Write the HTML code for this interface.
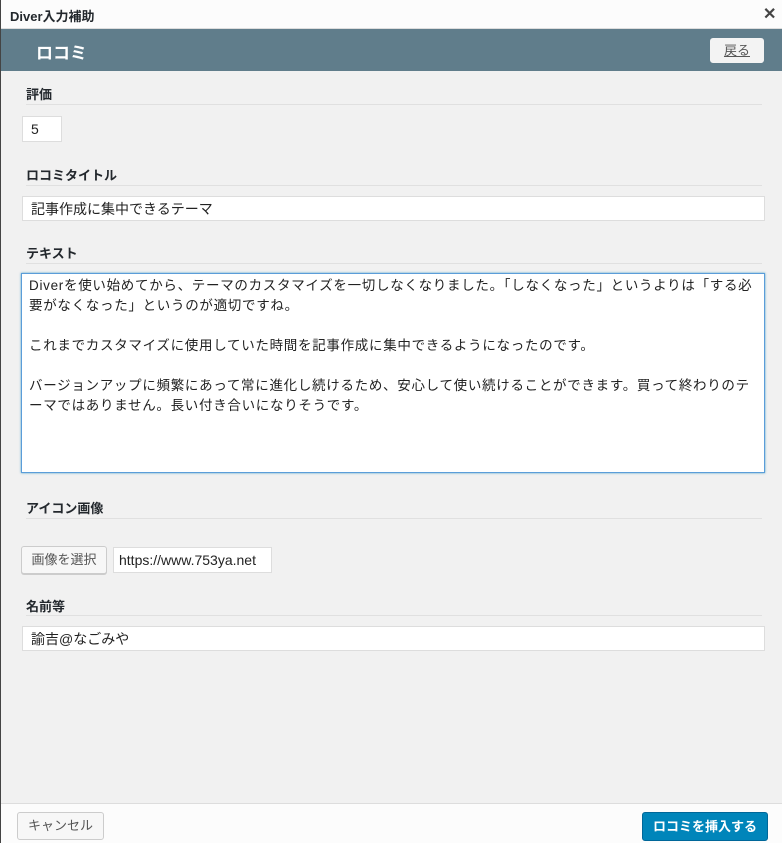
<!DOCTYPE html>
<html><head><meta charset="utf-8"><style>
*{box-sizing:border-box;margin:0;padding:0}
body{width:782px;height:843px;position:relative;overflow:hidden;background:#f1f1f1;font-family:"Liberation Sans","Noto Sans CJK JP",sans-serif;color:#23282d}
.a{position:absolute}
.lbl{position:absolute;left:26px;font-size:13px;font-weight:bold;color:#23282d}
.hr{position:absolute;left:26px;right:20px;height:1px;background:#e0e0e0}
.inp{position:absolute;background:#fff;border:1px solid #ddd;font-size:14px;padding:0 8px;display:flex;align-items:center;color:#222}
</style></head><body>
<div class="a" style="left:0;top:0;width:782px;height:29px;background:#fcfcfc;border-bottom:1px solid #ddd"></div>
<div class="a" style="left:10px;top:6px;font-size:13px;font-weight:bold">Diver入力補助</div>
<div class="a" style="left:763px;top:4px;font-size:16px;font-weight:bold;color:#444">✕</div>
<div class="a" style="left:0;top:29px;width:782px;height:42px;background:#607d8b"></div>
<div class="a" style="left:36px;top:39px;font-size:17px;font-weight:bold;color:#fff">ロコミ</div>
<div class="a" style="left:710px;top:38px;width:54px;height:25px;background:#f3f3f3;border-radius:3px;font-size:13px;color:#555;text-decoration:underline;text-align:center;line-height:25px">戻る</div>

<div class="lbl" style="top:84px">評価</div><div class="hr" style="top:104px"></div>
<div class="inp" style="left:22px;top:116px;width:40px;height:26px">5</div>
<div class="lbl" style="top:165px">ロコミタイトル</div><div class="hr" style="top:185px"></div>
<div class="inp" style="left:22px;top:196px;width:743px;height:25px">記事作成に集中できるテーマ</div>
<div class="lbl" style="top:243px">テキスト</div><div class="hr" style="top:263px"></div>
<div class="a" style="left:21px;top:273px;width:744px;height:200px;background:#fff;border:1px solid #5b9dd9;box-shadow:0 0 2px rgba(30,140,190,.8);font-size:13.5px;letter-spacing:0.7px;line-height:20px;padding:2px 7px;color:#222">Diverを使い始めてから、テーマのカスタマイズを一切しなくなりました。「しなくなった」というよりは「する必要がなくなった」というのが適切ですね。<br><br>これまでカスタマイズに使用していた時間を記事作成に集中できるようになったのです。<br><br>バージョンアップに頻繁にあって常に進化し続けるため、安心して使い続けることができます。買って終わりのテーマではありません。長い付き合いになりそうです。</div>
<div class="lbl" style="top:498px">アイコン画像</div><div class="hr" style="top:518px"></div>
<div class="a" style="left:21px;top:546px;width:86px;height:28px;background:#f7f7f7;border:1px solid #ccc;border-radius:3px;box-shadow:0 1px 0 #ccc;font-size:13px;color:#555;text-align:center;line-height:26px">画像を選択</div>
<div class="inp" style="left:113px;top:547px;width:159px;height:26px;overflow:hidden;white-space:nowrap;padding:0 5px">https://www.753ya.net</div>
<div class="lbl" style="top:596px">名前等</div><div class="hr" style="top:615px"></div>
<div class="inp" style="left:22px;top:626px;width:743px;height:25px">諭吉@なごみや</div>

<div class="a" style="left:0;top:803px;width:782px;height:40px;background:#fcfcfc;border-top:1px solid #ddd"></div>
<div class="a" style="left:17px;top:812px;width:87px;height:28px;background:#f7f7f7;border:1px solid #ccc;border-radius:3px;font-size:13px;color:#555;text-align:center;line-height:26px">キャンセル</div>
<div class="a" style="left:642px;top:812px;width:126px;height:29px;background:#0085ba;border:1px solid #006799;border-radius:3px;font-size:13px;font-weight:bold;color:#fff;text-align:center;line-height:27px">ロコミを挿入する</div>
<div class="a" style="left:0;top:0;width:1px;height:843px;background:#444"></div>
</body></html>
